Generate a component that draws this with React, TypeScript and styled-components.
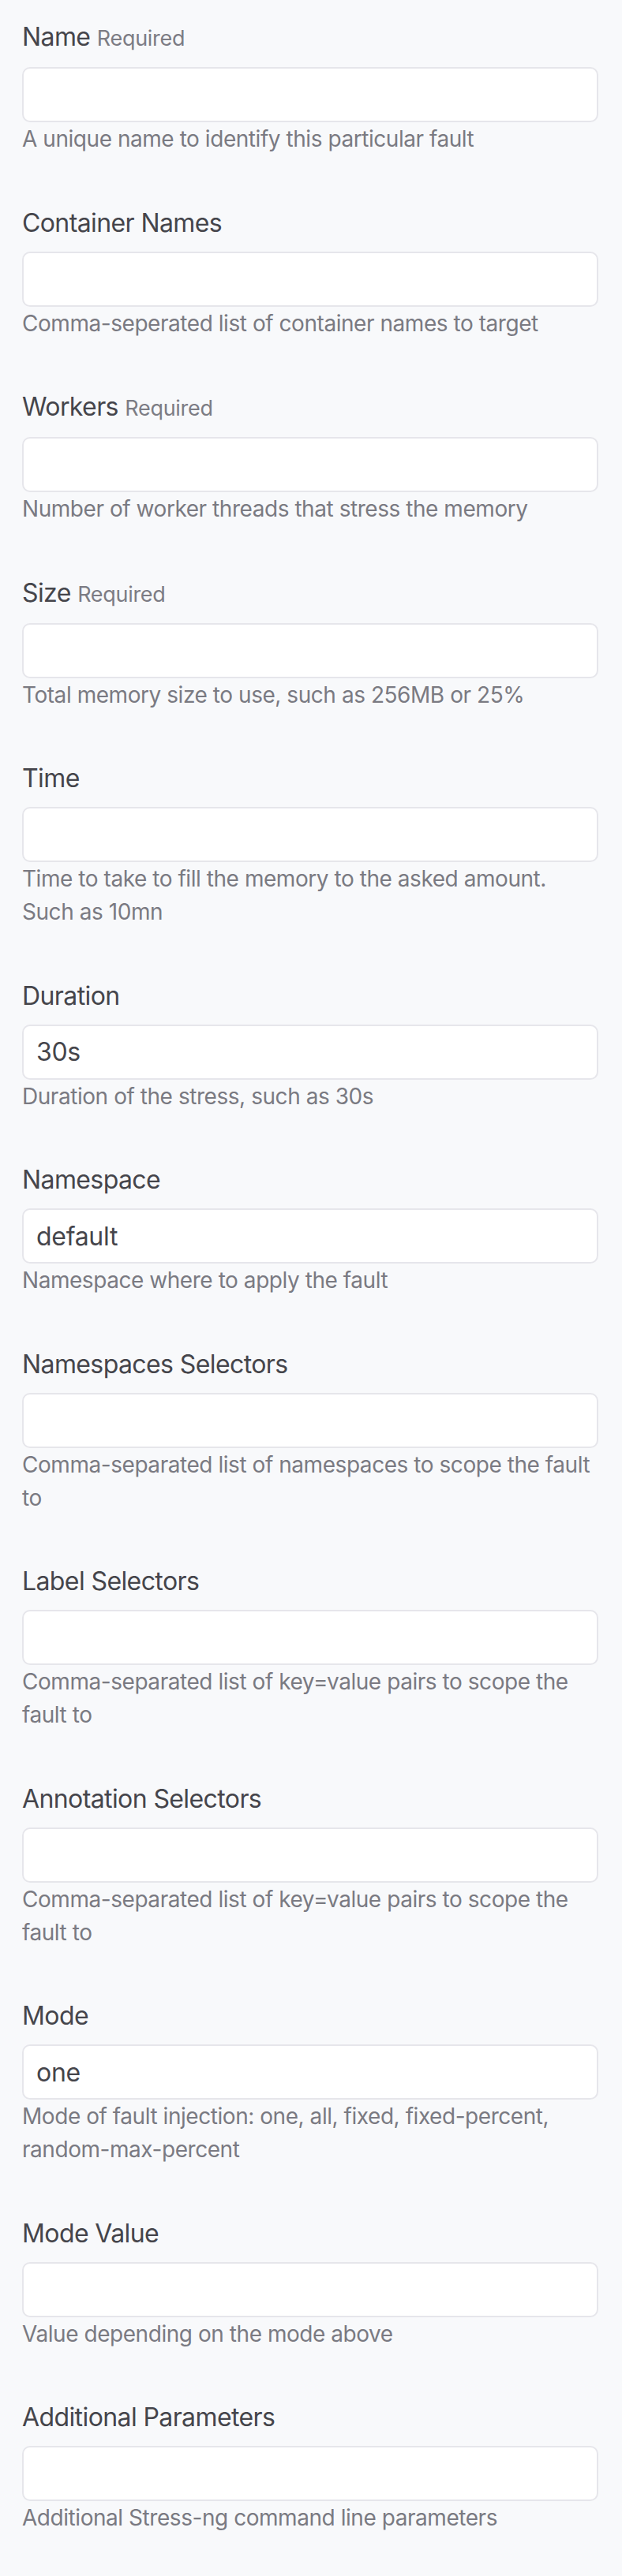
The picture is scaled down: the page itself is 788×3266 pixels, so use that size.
import React from "react";
import styled, { createGlobalStyle } from "styled-components";

const GlobalStyle = createGlobalStyle`
  html, body {
    margin: 0;
    padding: 0;
    background: #f8f9fb;
  }
  body {
    font-family: Inter, "Noto Sans", "Liberation Sans", sans-serif;
    -webkit-font-smoothing: antialiased;
  }
  * { box-sizing: border-box; }
`;

const Page = styled.form`
  display: flex;
  flex-direction: column;
  gap: 65.5px;
  padding: 27px 30px 53px 28px;
  background: #f8f9fb;
  min-height: 3266px;
`;

const Field = styled.div`
  display: flex;
  flex-direction: column;
`;

const Label = styled.label`
  font-size: 32px;
  line-height: 40px;
  color: #45454b;
  font-weight: 400;
  margin-bottom: 16px;
  letter-spacing: -0.6px;
`;

const RequiredTag = styled.span`
  font-size: 27px;
  color: #7c7c84;
  letter-spacing: -0.3px;
`;

const Input = styled.input`
  display: block;
  width: 100%;
  height: 70px;
  padding: 0 16px;
  border: 2px solid #e6e6eb;
  border-radius: 10px;
  background: #ffffff;
  font-family: inherit;
  font-size: 32px;
  color: #45454b;
  letter-spacing: -0.3px;
  outline: none;
`;

const Help = styled.p`
  margin: 0;
  font-size: 28px;
  line-height: 42px;
  color: #7a7a82;
  letter-spacing: -0.45px;
`;

type FieldDef = {
  label: string;
  required?: boolean;
  value?: string;
  help: string;
};

const fields: FieldDef[] = [
  { label: "Name", required: true, help: "A unique name to identify this particular fault" },
  { label: "Container Names", help: "Comma-seperated list of container names to target" },
  { label: "Workers", required: true, help: "Number of worker threads that stress the memory" },
  { label: "Size", required: true, help: "Total memory size to use, such as 256MB or 25%" },
  { label: "Time", help: "Time to take to fill the memory to the asked amount. Such as 10mn" },
  { label: "Duration", value: "30s", help: "Duration of the stress, such as 30s" },
  { label: "Namespace", value: "default", help: "Namespace where to apply the fault" },
  { label: "Namespaces Selectors", help: "Comma-separated list of namespaces to scope the fault to" },
  { label: "Label Selectors", help: "Comma-separated list of key=value pairs to scope the fault to" },
  { label: "Annotation Selectors", help: "Comma-separated list of key=value pairs to scope the fault to" },
  { label: "Mode", value: "one", help: "Mode of fault injection: one, all, fixed, fixed-percent, random-max-percent" },
  { label: "Mode Value", help: "Value depending on the mode above" },
  { label: "Additional Parameters", help: "Additional Stress-ng command line parameters" },
];

export default function App() {
  return (
    <>
      <GlobalStyle />
      <Page onSubmit={(e) => e.preventDefault()}>
        {fields.map((f, i) => (
          <Field key={f.label}>
            <Label htmlFor={`f-${i}`}>
              {f.label}
              {f.required ? <> <RequiredTag>Required</RequiredTag></> : null}
            </Label>
            <Input id={`f-${i}`} type="text" defaultValue={f.value ?? ""} />
            <Help>{f.help}</Help>
          </Field>
        ))}
      </Page>
    </>
  );
}
